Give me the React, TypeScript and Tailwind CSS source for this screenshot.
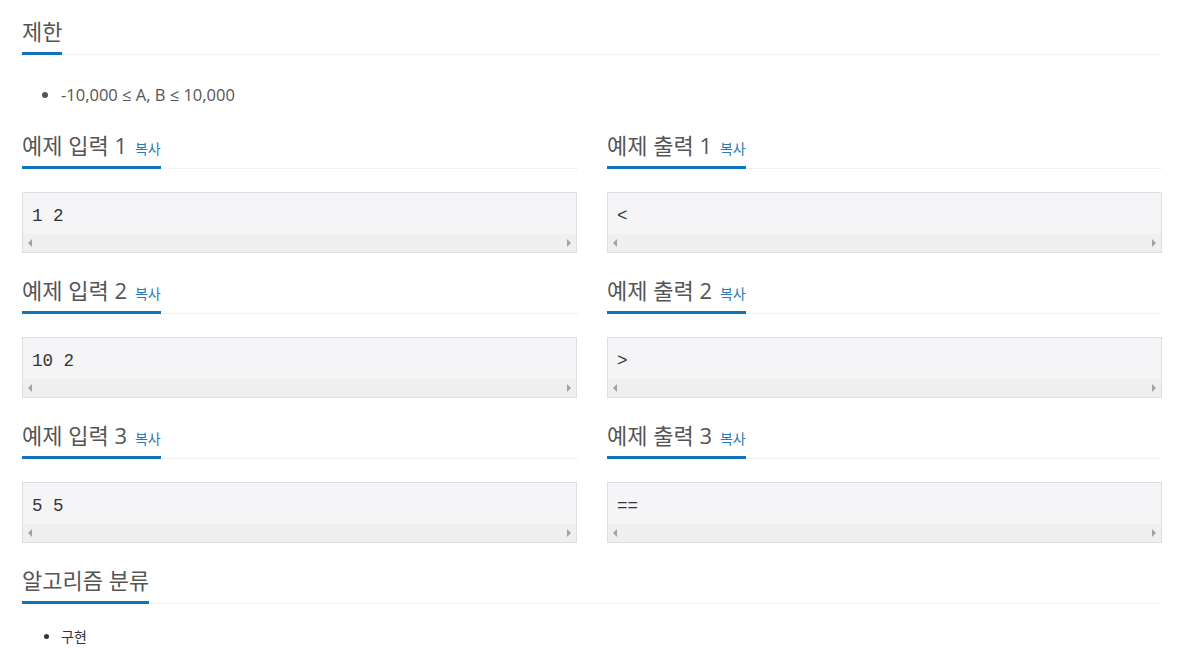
const sans = "font-['Open_Sans','Noto_Sans_CJK_KR',sans-serif]";

const samples = [
  { input: "1 2", output: "<" },
  { input: "10 2", output: ">" },
  { input: "5 5", output: "==" },
];

function Headline({ title, copy }: { title: string; copy?: boolean }) {
  return (
    <div className="flex border-b border-dotted border-[#e5e5e5]">
      <h2 className="-mb-px h-[38px] border-b-[3px] border-[#0f74ba] pb-[7px] text-[22px] leading-[28px] font-normal whitespace-nowrap text-[#555]">
        {title}
        {copy && (
          <span className="ml-[8px] cursor-pointer text-[14px] leading-none text-[#2a7ab9]">
            복사
          </span>
        )}
      </h2>
    </div>
  );
}

// Fake horizontal scrollbar under each sample box
function ScrollBar() {
  return (
    <div className="flex h-[18px] items-center justify-between bg-[#efefef] px-[5px]">
      <span className="h-0 w-0 border-y-[4px] border-r-[4px] border-y-transparent border-r-[#a3a3a3]" />
      <span className="h-0 w-0 border-y-[4px] border-l-[4px] border-y-transparent border-l-[#a3a3a3]" />
    </div>
  );
}

function SampleBox({ text }: { text: string }) {
  return (
    <div className="border border-[#dedee2] bg-[#f5f5f7]">
      <pre className="px-[9px] pt-[12px] pb-[7px] font-['Liberation_Mono',monospace] text-[17.5px] leading-[22px] text-[#333]">
        {text}
      </pre>
      <ScrollBar />
    </div>
  );
}

export default function App() {
  return (
    <div className={`${sans} min-h-screen bg-white pt-[17px] pr-[28px] pl-[22px]`}>
      {/* 제한 */}
      <Headline title="제한" />

      <ul className="mt-[29px] list-disc pl-[39px] text-[16.5px] leading-[22px] text-[#555] marker:text-[#555]">
        <li>-10,000 ≤ A, B ≤ 10,000</li>
      </ul>

      {/* Samples */}
      <div className="mt-[25px] grid grid-cols-2 gap-x-[30px]">
        {samples.map((s, i) => (
          <div key={i} className="contents">
            <div className="mb-[23px]">
              <Headline title={`예제 입력 ${i + 1}`} copy />
              <div className="mt-[23px]">
                <SampleBox text={s.input} />
              </div>
            </div>
            <div className="mb-[23px]">
              <Headline title={`예제 출력 ${i + 1}`} copy />
              <div className="mt-[23px]">
                <SampleBox text={s.output} />
              </div>
            </div>
          </div>
        ))}
      </div>

      {/* 알고리즘 분류 */}
      <Headline title="알고리즘 분류" />

      <ul className="mt-[23px] list-disc pl-[39px] text-[14px] leading-[20px] text-[#333]">
        <li>구현</li>
      </ul>
    </div>
  );
}
